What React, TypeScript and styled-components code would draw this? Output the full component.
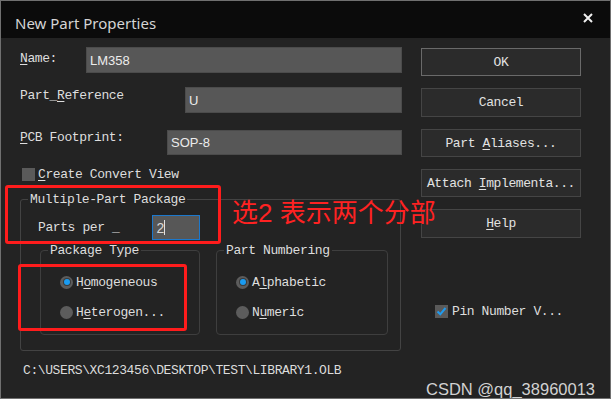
import styled, { createGlobalStyle } from "styled-components";

const GlobalStyle = createGlobalStyle`
    html, body {
        margin: 0;
        padding: 0;
        background: #232323;
    }
    body {
        font-family: "Liberation Mono", "DejaVu Sans Mono", monospace;
    }
`;

export default function App() {
    return (
        <>
            <GlobalStyle />
            <Window>
                <TitleBar>
                    <Title>New Part Properties</Title>
                    <CloseButton>
                        <svg width="10" height="10" viewBox="0 0 10 10">
                            <path d="M1 1 L9 9 M9 1 L1 9" stroke="#f0f0f0" strokeWidth="2" />
                        </svg>
                    </CloseButton>
                </TitleBar>
                <Body>
                    <LeftPane>
                        <FieldRow $top={9}>
                            <Label $offset={5}><Key>N</Key>ame:</Label>
                            <TextInput $left={86} $height={26}>LM358</TextInput>
                        </FieldRow>
                        <FieldRow $top={14}>
                            <Label $offset={2}>Part_<Key>R</Key>eference</Label>
                            <TextInput $left={185} $height={26}>U</TextInput>
                        </FieldRow>
                        <FieldRow $top={17}>
                            <Label $offset={1}><Key>P</Key>CB Footprint:</Label>
                            <TextInput $left={167} $height={25}>SOP-8</TextInput>
                        </FieldRow>
                        <CheckRow $top={13}>
                            <CheckBox />
                            <Label><Key>C</Key>reate Convert View</Label>
                        </CheckRow>
                        <Group>
                            <Legend>Multiple-Part Package</Legend>
                            <PartsRow>
                                <Label>Parts per _</Label>
                                <CountInput>2<Caret /></CountInput>
                            </PartsRow>
                            <InnerRow>
                                <InnerGroup $width={160}>
                                    <Legend>Package Type</Legend>
                                    <RadioList>
                                        <RadioRow>
                                            <Radio $checked />
                                            <Label>H<Key>o</Key>mogeneous</Label>
                                        </RadioRow>
                                        <RadioRow>
                                            <Radio />
                                            <Label>H<Key>e</Key>terogen...</Label>
                                        </RadioRow>
                                    </RadioList>
                                </InnerGroup>
                                <InnerGroup $width={172}>
                                    <Legend>Part Numbering</Legend>
                                    <RadioList>
                                        <RadioRow>
                                            <Radio $checked />
                                            <Label>A<Key>l</Key>phabetic</Label>
                                        </RadioRow>
                                        <RadioRow>
                                            <Radio />
                                            <Label>N<Key>u</Key>meric</Label>
                                        </RadioRow>
                                    </RadioList>
                                </InnerGroup>
                            </InnerRow>
                        </Group>
                        <PathText>C:\USERS\XC123456\DESKTOP\TEST\LIBRARY1.OLB</PathText>
                    </LeftPane>
                    <RightPane>
                        <Button $default $height={28}><span>OK</span></Button>
                        <Button $height={29}><span>Cancel</span></Button>
                        <Button $height={28}><span>Part <Key>A</Key>liases...</span></Button>
                        <Button $height={28}><span>Attach <Key>I</Key>mplementa...</span></Button>
                        <Button $height={29}><span><Key>H</Key>elp</span></Button>
                        <PinRow>
                            <CheckBox>
                                <svg width="11" height="11" viewBox="0 0 11 11">
                                    <path d="M1.5 5.5 L4.3 8.3 L9.5 2" stroke="#1e9bf0" strokeWidth="2" fill="none" />
                                </svg>
                            </CheckBox>
                            <Label>Pin Number V...</Label>
                        </PinRow>
                    </RightPane>
                </Body>
                <Highlight style={{ left: 4, top: 184, width: 216, height: 59 }} />
                <Highlight style={{ left: 17, top: 263, width: 169, height: 67 }} />
                <Annotation>选2 表示两个分部</Annotation>
                <Watermark>CSDN @qq_38960013</Watermark>
            </Window>
        </>
    );
}

const Window = styled.div`
    position: relative;
    box-sizing: border-box;
    width: 611px;
    height: 399px;
    border: 1px solid #707070;
    background: #232323;
    display: flex;
    flex-direction: column;
    overflow: hidden;
`;

const TitleBar = styled.div`
    height: 37px;
    flex-shrink: 0;
    background: #0b0b0b;
    display: flex;
    align-items: flex-start;
    justify-content: space-between;
`;

const Title = styled.div`
    font-family: "Noto Sans", "Open Sans", sans-serif;
    font-size: 15px;
    color: #d4d4d4;
    margin: 12px 0 0 14px;
    line-height: 20px;
`;

const CloseButton = styled.div`
    margin: 9px 17px 0 0;
    width: 10px;
    height: 10px;
`;

const Body = styled.div`
    flex: 1;
    display: flex;
`;

const LeftPane = styled.div`
    width: 420px;
    box-sizing: border-box;
    padding-left: 19px;
    display: flex;
    flex-direction: column;
`;

const RightPane = styled.div`
    width: 160px;
    padding-top: 10px;
    display: flex;
    flex-direction: column;
    gap: 12px;
`;

const FieldRow = styled.div<{ $top: number }>`
    display: flex;
    align-items: flex-start;
    margin-top: ${props => props.$top}px;
    width: 382px;
`;

const Label = styled.span<{ $offset?: number }>`
    font-size: 13px;
    line-height: 13px;
    letter-spacing: -0.4px;
    color: #dedede;
    white-space: nowrap;
    margin-top: ${props => props.$offset || 0}px;
`;

const Key = styled.span`
    text-decoration: underline;
    text-underline-offset: 2px;
`;

const TextInput = styled.div<{ $left: number; $height: number }>`
    margin-left: auto;
    width: ${props => 402 - props.$left}px;
    height: ${props => props.$height}px;
    box-sizing: border-box;
    background: #575757;
    border: 1px solid #4b4b4b;
    font-family: "Liberation Sans", Arial, sans-serif;
    font-size: 13px;
    color: #ececec;
    display: flex;
    align-items: center;
    padding-left: 3px;
`;

const CheckRow = styled.div<{ $top: number }>`
    display: flex;
    align-items: center;
    gap: 3px;
    margin-top: ${props => props.$top}px;
    margin-left: 2px;
`;

const CheckBox = styled.span`
    width: 13px;
    height: 13px;
    background: #5a5a5a;
    display: inline-flex;
    align-items: center;
    justify-content: center;
    flex-shrink: 0;
`;

const Group = styled.fieldset`
    margin: 12px 0 0 0;
    padding: 0 0 15px 0;
    width: 381px;
    box-sizing: border-box;
    border: 1px solid #434343;
    border-radius: 3px;
    min-inline-size: 0;
`;

const Legend = styled.legend`
    font-size: 13px;
    line-height: 13px;
    letter-spacing: -0.4px;
    color: #dedede;
    padding: 0 2px;
    margin-left: 7px;
`;

const PartsRow = styled.div`
    display: flex;
    align-items: center;
    margin: 9px 0 0 17px;
`;

const CountInput = styled.div`
    margin-left: 33px;
    width: 48px;
    height: 25px;
    box-sizing: border-box;
    background: #575757;
    border: 1px solid #1c78cc;
    font-family: "Liberation Sans", Arial, sans-serif;
    font-size: 14px;
    color: #d8d8d8;
    display: flex;
    align-items: center;
    padding-left: 3px;
`;

const Caret = styled.span`
    width: 1px;
    height: 15px;
    background: #e0e0e0;
`;

const InnerRow = styled.div`
    display: flex;
    gap: 16px;
    margin: 4px 0 0 19px;
`;

const InnerGroup = styled.fieldset<{ $width: number }>`
    margin: 0;
    width: ${props => props.$width}px;
    box-sizing: border-box;
    padding: 17px 0 14px 0;
    border: 1px solid #3e3e3e;
    border-radius: 4px;
    min-inline-size: 0;
`;

const RadioList = styled.div`
    display: flex;
    flex-direction: column;
    gap: 14px;
    padding-left: 19px;
`;

const RadioRow = styled.div`
    display: flex;
    align-items: center;
    gap: 3px;
    height: 16px;
`;

const Radio = styled.span<{ $checked?: boolean }>`
    width: 13px;
    height: 13px;
    border-radius: 50%;
    background: #5c5c5c;
    display: inline-flex;
    align-items: center;
    justify-content: center;
    &::after {
        content: "";
        display: ${props => props.$checked ? "block" : "none"};
        width: 6px;
        height: 6px;
        border-radius: 50%;
        background: #1a9cf2;
        box-shadow: 0 0 0 1px #3a3a3a;
    }
`;

const PathText = styled.div`
    margin: 13px 0 0 3px;
    font-size: 13px;
    line-height: 13px;
    letter-spacing: -0.4px;
    color: #dcdcdc;
`;

const Button = styled.div<{ $default?: boolean; $height: number }>`
    height: ${props => props.$height}px;
    box-sizing: border-box;
    border: 1px solid ${props => props.$default ? "#6a6a6a" : "#454545"};
    background: #2b2b2b;
    display: flex;
    align-items: center;
    justify-content: center;
    font-size: 13px;
    letter-spacing: -0.4px;
    color: #e2e2e2;
    white-space: pre;
`;

const PinRow = styled.div`
    display: flex;
    align-items: center;
    gap: 4px;
    margin: 55px 0 0 14px;
`;

const Highlight = styled.div`
    position: absolute;
    box-sizing: border-box;
    border: 3px solid #ff1c1c;
    border-radius: 3px;
`;

const Annotation = styled.div`
    position: absolute;
    left: 231px;
    top: 197px;
    font-family: "Liberation Sans", "Noto Sans CJK SC", sans-serif;
    font-size: 26px;
    line-height: 30px;
    color: #ff2222;
    white-space: nowrap;
`;

const Watermark = styled.div`
    position: absolute;
    left: 425px;
    top: 378px;
    font-family: "Liberation Sans", Arial, sans-serif;
    font-size: 16.5px;
    line-height: 20px;
    color: #d2d2d2;
    white-space: nowrap;
`;
